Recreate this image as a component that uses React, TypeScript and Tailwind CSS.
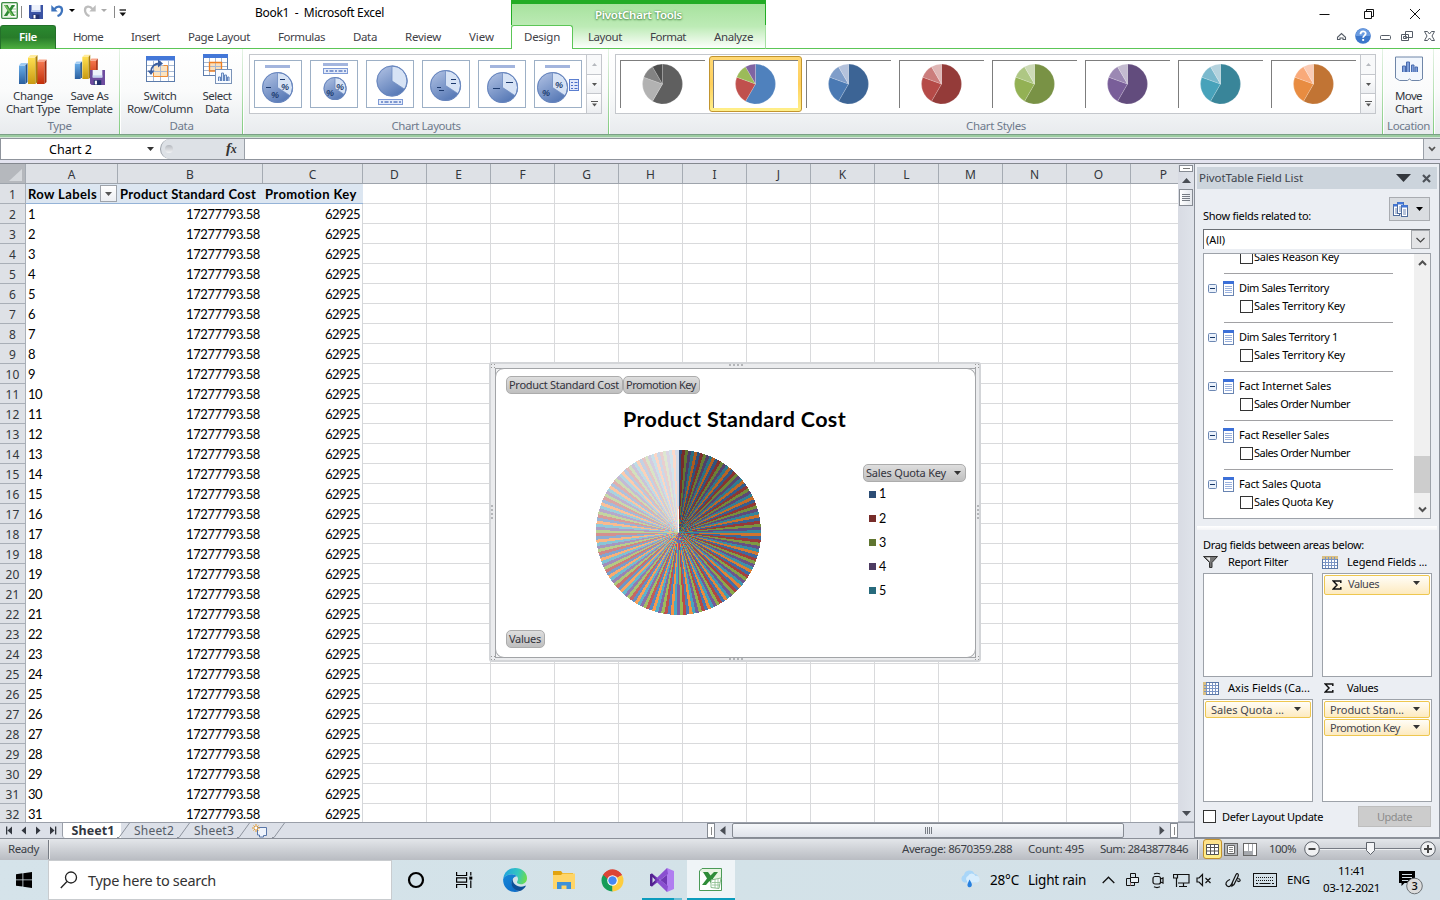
import React, { useLayoutEffect, useRef, useState } from "react";

const UI = "font-['Noto_Sans','Open_Sans',sans-serif]";
const CAL = "font-['Lato','Liberation_Sans',sans-serif]";

/* Text whose letter spacing is adjusted so that it fills a given width. */
function T({ w, className = "", children }: { w: number; className?: string; children: string }) {
  const ref = useRef<HTMLSpanElement>(null);
  const [ls, setLs] = useState(0);
  useLayoutEffect(() => {
    if (ref.current) {
      const natural = ref.current.getBoundingClientRect().width;
      setLs((w - natural) / children.length);
    }
  }, []);
  return (
    <span ref={ref} className={"inline-block shrink-0 whitespace-pre leading-none " + className} style={{ letterSpacing: ls }}>
      {children}
    </span>
  );
}

function Caret({ className = "", w = 7, h = 4, up = false }: { className?: string; w?: number; h?: number; up?: boolean }) {
  return (
    <svg width={w} height={h} viewBox={`0 0 ${w} ${h}`} className={"shrink-0 " + className}>
      <path d={up ? `M0 ${h}H${w}L${w / 2} 0Z` : `M0 0H${w}L${w / 2} ${h}Z`} fill="currentColor" />
    </svg>
  );
}

function wedge(cx: number, cy: number, r: number, a0: number, a1: number) {
  const p = (a: number) => {
    const t = ((a - 90) * Math.PI) / 180;
    return `${(cx + r * Math.cos(t)).toFixed(3)} ${(cy + r * Math.sin(t)).toFixed(3)}`;
  };
  return `M${cx} ${cy}L${p(a0)}A${r} ${r} 0 ${a1 - a0 > 180 ? 1 : 0} 1 ${p(a1)}Z`;
}

/* ---------- Title bar icons ---------- */
function ExcelIcon({ size = 17 }: { size?: number }) {
  return (
    <svg width={size} height={size} viewBox="0 0 17 17">
      <rect x=".7" y=".7" width="15.6" height="15.6" rx="1" fill="#eaf5e4" stroke="#3d8b45" strokeWidth="1.3" />
      <path d="M10 2h5v13h-5z" fill="#fff" />
      <path d="M10 4h4M10 7h5M10 10h5M10 13h5" stroke="#9cc89a" strokeWidth="1" />
      <path d="M3 3h3.600l2 3.400L10.800 3H14L10.400 8.500 14 14h-3.500L8.300 10.600 6.200 14H2.800L6.500 8.400Z" fill="#2f8a35" />
      <path d="M3 3h2l7.600 11h-2Z" fill="#77bd5e" />
    </svg>
  );
}
function SaveIcon({ c = "#3a53a4", size = 14 }: { c?: string; size?: number }) {
  return (
    <svg width={size} height={size} viewBox="0 0 14 14">
      <path d="M0 0h14v14H1.500L0 12.500Z" fill={c} />
      <path d="M2.500 0h9v7h-9z" fill="#eef2fb" />
      <path d="M2.500 5h9v2h-9z" fill="#c4d2f0" />
      <path d="M3.500 9.500h7V14h-7z" fill="#22326e" />
      <path d="M4.500 10h2v3.500h-2z" fill="#fff" />
    </svg>
  );
}
function UndoIcon({ c, flip = false }: { c: string; flip?: boolean }) {
  return (
    <svg width="13" height="13" viewBox="0 0 13 13" className={flip ? "-scale-x-100" : ""}>
      <path d="M3.500 5.200C6 1.500 11 1.800 11 6c0 3-1.500 5-4.500 6" fill="none" stroke={c} strokeWidth="2.300" />
      <path d="M.3 1v6.500h6.400Z" fill={c} />
    </svg>
  );
}

function Header() {
  return (
    <div className="flex h-[49px] shrink-0 bg-white">
      <div className="flex w-[511px] flex-col">
        <div className="flex h-[25px] items-center">
          <div className="mb-1 ml-px w-[20px]"><ExcelIcon /></div>
          <div className="mb-0.5 h-3 w-px bg-[#888]" />
          <div className="mb-0.5 ml-[7px] w-[22px]"><SaveIcon /></div>
          <div className="mb-1 w-[18px]"><UndoIcon c="#3f74bd" /></div>
          <Caret className="mb-1 text-black" w={6} h={3} />
          <div className="mb-1 ml-2 w-[18px]"><UndoIcon c="#bdbdbd" flip /></div>
          <Caret className="mb-1 text-[#aaa]" w={6} h={3} />
          <div className="mb-0.5 ml-[7px] h-3 w-px bg-[#888]" />
          <svg width="8" height="8" viewBox="0 0 8 8" className="ml-1"><path d="M.5 1h6.500" stroke="#111" strokeWidth="1.300" /><path d="M.5 3.500h6.500L3.800 7.200Z" fill="#111" /></svg>
          <T w={129} className={"ml-[128px] mt-px text-[12px] text-black " + UI}>Book1  -  Microsoft Excel</T>
        </div>
        <div className="flex h-[24px]">
          <div className="flex h-[24px] w-[56px] items-center justify-center rounded-t-[3px] border border-b-0 border-[#24702a] bg-gradient-to-b from-[#2a8a30] via-[#287c2a] to-[#4eb040]">
            <T w={18} className={"pb-[2px] text-[11.500px] font-semibold text-white " + UI}>File</T>
          </div>
          <div className={"flex flex-1 items-center gap-7 border-b border-[#5cc657] pl-[17px] pt-px text-[11.500px] text-[#3f4147] " + UI}>
            <T w={30}>Home</T><T w={29}>Insert</T><T w={62}>Page Layout</T><T w={47}>Formulas</T><T w={24}>Data</T><T w={36}>Review</T><T w={25}>View</T>
          </div>
        </div>
      </div>
      <div className="flex w-[255px] flex-col border-t-4 border-[#22ac25] bg-gradient-to-b from-[#a7e29e] via-[#bdebb6] to-white">
        <div className="flex h-[21px] items-center justify-center border-x border-[#22ac25] pt-px">
          <T w={87} className={"text-[11.500px] font-semibold text-white [text-shadow:0_1px_2px_#4c8d49,0_0_2px_#5a9b57] " + UI}>PivotChart Tools</T>
        </div>
        <div className={"flex h-[24px] text-[11.500px] text-[#3f4147] " + UI}>
          <div className="flex w-[62px] items-center justify-center rounded-t-[3px] border border-b-0 border-[#5cc657] bg-white"><T w={36} className="pb-[2px]">Design</T></div>
          <div className="flex flex-1 items-center gap-7 border-b border-b-[#5cc657] border-r border-r-[#a5dfa2] pl-[15px] pt-px">
            <T w={34}>Layout</T><T w={36}>Format</T><T w={39}>Analyze</T>
          </div>
        </div>
      </div>
      <div className="flex flex-1 flex-col border-b border-[#5cc657]">
        <div className="flex h-[26px] items-center justify-end pt-0.5">
          <svg width="102" height="14" viewBox="0 0 102 14" className="mr-[19px]" fill="none" stroke="#111" strokeWidth="1">
            <path d="M.5 7.500h10" /><path d="M45.500 4.500h7v7h-7zM47.500 4.500v-2h7v7h-2" /><path d="M91 2l10 10M101 2l-10 10" />
          </svg>
        </div>
        <div className="flex h-[22px] items-center justify-end pb-0.5">
          <svg width="100" height="18" viewBox="0 0 100 18" className="mr-1">
            <path d="M1.500 12.500v-2.200l4-3.800 4 3.800v2.200H7V11H4v1.500Z" fill="#fff" stroke="#555c66" strokeWidth="1.100" />
            <circle cx="27" cy="9" r="7.800" fill="#3d77cb" />
            <path d="M19.500 9a7.500 7.500 0 0 1 15 0Z" fill="#6a9be0" />
            <path d="M24.500 7.200c0-3.800 5.200-3.600 5.200-.6 0 2-2.600 2-2.600 4.200" fill="none" stroke="#fff" strokeWidth="1.800" />
            <rect x="26.200" y="12" width="1.900" height="1.900" fill="#fff" />
            <rect x="44.500" y="8.500" width="10" height="4" rx="1" fill="#fff" stroke="#555c66" />
            <path d="M69.500 4.500h7v6h-7zM65.500 7.500h7v6h-7z" fill="#fff" stroke="#555c66" /><path d="M67.500 9.500h3v2h-3z" fill="none" stroke="#555c66" />
            <path d="M88.500 4.500h3l2 2.500 2-2.500h3L96 9l2.500 4.500h-3l-2-2.500-2 2.500h-3L91 9Z" fill="#fff" stroke="#555c66" />
          </svg>
        </div>
      </div>
    </div>
  );
}

/* ---------- Ribbon ---------- */
function Bars({ w = 30 }: { w?: number }) {
  return (
    <svg width={w} height={w} viewBox="0 0 30 30">
      <defs>
        <linearGradient id="bb" x2="0" y2="1"><stop stopColor="#68ade9" /><stop offset="1" stopColor="#2a5f9f" /></linearGradient>
        <linearGradient id="by" x2="0" y2="1"><stop stopColor="#ffdf50" /><stop offset="1" stopColor="#c89a12" /></linearGradient>
        <linearGradient id="br" x2="0" y2="1"><stop stopColor="#f4764e" /><stop offset="1" stopColor="#c22e08" /></linearGradient>
      </defs>
      <path d="M1 11.500h6.500V30H1z" fill="url(#bb)" /><path d="M1 11.500l2-2.500h6.500l-2 2.500Z" fill="#9fcbf3" /><path d="M7.500 11.500l2-2.500v19l-2 2Z" fill="#23538c" />
      <path d="M19 8h7.500v22H19z" fill="url(#br)" /><path d="M19 8l2-2.500h7.500l-2 2.500Z" fill="#f9a58a" /><path d="M26.500 8l2-2.500V28l-2 2Z" fill="#a32a0c" />
      <path d="M10 3.500h7.500V30H10z" fill="url(#by)" /><path d="M10 3.500L12.500 1h7l-2 2.500Z" fill="#ffeb9c" /><path d="M17.500 3.500l2-2.500v27l-2 2Z" fill="#a87d0a" />
    </svg>
  );
}
function Table({ swap = false }: { swap?: boolean }) {
  return swap ? (
    <svg width="32" height="32" viewBox="0 0 32 32">
      <rect x="2.500" y="2.500" width="28" height="25" fill="#fff" stroke="#5b7bab" />
      <rect x="2" y="2" width="29" height="4.500" fill="#4377d8" />
      <path d="M9 12h15v11H9z" fill="#fbe3c0" />
      <path d="M3 11.500h27M3 17.500h27M3 22.500h27M9.500 7v20M16.500 7v20M24.500 7v20" stroke="#a9bbd6" />
      <path d="M9.500 18.500v4h14v-11h-4" stroke="#ef8d36" fill="none" />
      <path d="M7 18c0-5.500 4-8.500 8.500-8.500" stroke="#3a5d9d" strokeWidth="1.800" fill="none" />
      <path d="M14 5.500l5 4-5 4ZM3.500 16.500h7L7 21Z" fill="#3a5d9d" />
    </svg>
  ) : (
    <svg width="32" height="32" viewBox="0 0 32 32">
      <rect x="2.500" y="1.500" width="24" height="20" fill="#fff" stroke="#5b7bab" />
      <rect x="2" y="0" width="25" height="4" fill="#4377d8" />
      <path d="M8.500 9h12v8h-12z" fill="#fbdfba" />
      <path d="M3 8.500h23M3 12.500h23M3 16.500h23M8.500 4v17M14.500 4v17M20.500 4v17" stroke="#a7b7cf" />
      <path d="M8.500 8.500h12v8.500h-12z" stroke="#ee7f22" strokeWidth="1.300" fill="none" />
      <rect x="14.500" y="15.500" width="16" height="14" fill="#f8fbff" stroke="#7a93b8" />
      <path d="M17.500 27v-4h2v4M20.500 27v-8h2v8M23.500 27v-6h2v6M26.500 27v-4h1.500v4" stroke="#6284bc" fill="#cfe0f6" />
    </svg>
  );
}

function RibbonGroup({ label, lw, className, children }: { label: string; lw: number; className: string; children: React.ReactNode }) {
  return (
    <div className={"flex shrink-0 flex-col " + className}>
      <div className="flex h-[67px] items-start">{children}</div>
      <div className={"flex h-[18px] items-center justify-center pt-0.5 text-[11.500px] text-[#6e7a8c] " + UI}><T w={lw}>{label}</T></div>
    </div>
  );
}
function Sep() {
  return <div className="h-[85px] w-[2px] shrink-0 border-r border-white bg-gradient-to-b from-[#e6f3e6] via-[#b5e0b3] to-[#7fcb7d]" />;
}
function BigButton({ icon, a, aw, b, bw, className }: { icon: React.ReactNode; a: string; aw: number; b: string; bw: number; className: string }) {
  return (
    <div className={"flex flex-col items-center pt-[5px] text-[11.500px] text-[#33373e] " + UI + " " + className}>
      <div className="flex h-[36px] items-start justify-center">{icon}</div>
      <div className="flex h-[13px] items-center"><T w={aw} className="pb-px">{a}</T></div>
      <div className="flex h-[13px] items-center"><T w={bw} className="pb-px">{b}</T></div>
    </div>
  );
}
function GalleryArrows() {
  return (
    <div className="flex w-[15px] flex-col border-l border-[#c4c7cc] text-[#555]">
      <div className="flex flex-1 items-center justify-center bg-[#f8f9fa]"><Caret up w={5} h={3} className="text-[#b6b9be]" /></div>
      <div className="flex flex-1 items-center justify-center border-y border-[#c4c7cc] bg-gradient-to-b from-white to-[#eceef1]"><Caret w={5} h={3} /></div>
      <div className="flex flex-1 items-center justify-center bg-gradient-to-b from-white to-[#eceef1]">
        <svg width="7" height="6" viewBox="0 0 7 6"><path d="M0 .5h7" stroke="#555" /><path d="M1 2.500h5L3.500 5.500Z" fill="#555" /></svg>
      </div>
    </div>
  );
}

function LayoutThumb({ kind }: { kind: number }) {
  const geo = [[22.5, 26.5, 15.5], [24, 27.5, 11.5], [25, 20, 15.5], [22.5, 24.5, 15.5], [23.5, 26.5, 15.5], [17.5, 26.5, 15.5]][kind];
  const [cx, cy, r] = geo;
  const bar = (x: number, y: number) => <rect x={x} y={y} width="25" height="3" fill="#a3b5de" />;
  const legend = (x: number, y: number) => (
    <g><rect x={x + 0.5} y={y + 0.5} width="24" height="5" fill="#e4ebf9" stroke="#7f9bd6" /><path d={`M${x + 3} ${y + 3}h20`} stroke="#5f7fc4" strokeWidth="1.500" strokeDasharray="2 1.500 4 1.500" /></g>
  );
  const pct = (x: number, y: number) => <text x={x} y={y} fontSize="9" fontStyle="italic" fontWeight="700" fill="#1c3a6e" fontFamily="Liberation Sans">%</text>;
  return (
    <div className="h-[48px] w-[48px] shrink-0 border border-[#9db0c6] bg-white">
      <svg width="46" height="46" viewBox="0 0 46 46">
        <defs><linearGradient id={"lg" + kind} x2=".6" y2="1"><stop stopColor="#b6c6e6" /><stop offset="1" stopColor="#5779b6" /></linearGradient></defs>
        <circle cx={cx} cy={cy} r={r} fill={`url(#lg${kind})`} />
        <path d={wedge(cx, cy, r - 0.5, 0, 123)} fill="#d7e3f5" stroke="#6d8bc2" strokeWidth=".8" />
        <circle cx={cx} cy={cy} r={r - 0.5} fill="none" stroke="#6886be" />
        {kind === 0 && <>{bar(10, 4)}{pct(26, 29)}{pct(16, 37)}<path d="M25 18.500h5M11 26.500h5" stroke="#1c3a6e" /></>}
        {kind === 1 && <>{bar(12, 2)}{legend(12, 7)}{pct(25, 29)}{pct(15, 35)}</>}
        {kind === 2 && legend(11, 38)}
        {kind === 3 && <path d="M28 18.500h5M28 22.500h5M14 26.500h4M16 29.500h5" stroke="#1c3a6e" />}
        {kind === 4 && <>{bar(11, 4)}<path d="M27 21.500h7M14 27.500h7" stroke="#1c3a6e" /></>}
        {kind === 5 && <>{bar(10, 4)}{pct(20, 27)}{pct(7, 35)}<rect x="34.500" y="18.500" width="9" height="11" fill="#dfe8fa" stroke="#5c7fd0" /><path d="M36 21.500h2M39.500 21.500h3M36 24.500h2M39.500 24.500h3M36 27.500h2M39.500 27.500h3" stroke="#4a6fc6" /></>}
      </svg>
    </div>
  );
}

const STYLES = [
  ["#5f5f5f", "#b2b2b2", "#838383", "#4d4d4d"],
  ["#4f81bd", "#c0504d", "#9bbb59", "#8064a2"],
  ["#3c6495", "#4a79b3", "#7f9dc9", "#b4c2dc"],
  ["#943b39", "#b54a47", "#cb7d7c", "#dfb6b5"],
  ["#799245", "#93b154", "#aec784", "#cddab7"],
  ["#624c7d", "#795e99", "#9b88b3", "#c4bbd0"],
  ["#398599", "#47a2ba", "#7bb9cd", "#b5d3de"],
  ["#c17434", "#e88c41", "#f9aa7a", "#facbb5"],
];
function StyleThumb({ c, on }: { c: string[]; on: boolean }) {
  const a = [0, 210, 290, 330, 360];
  return (
    <div className={"flex h-[56px] w-[93px] shrink-0 items-center " + (on ? "justify-center rounded-[3px] border border-[#c2952f] bg-gradient-to-b from-[#ffd873] via-[#ffd05c] to-[#fff08a]" : "pl-[4px]")}>
      <div className="h-[48px] w-[85px] border-l border-t border-[#7d7d7d] bg-white">
        <svg width="84" height="47" viewBox="0 0 84 47">
          {c.map((f, i) => <path key={i} d={wedge(41.5, 23, 20, a[i], a[i + 1])} fill={f} stroke="#fff" strokeOpacity=".35" strokeWidth=".5" />)}
        </svg>
      </div>
    </div>
  );
}

function Ribbon() {
  return (
    <>
      <div className="flex h-[85px] shrink-0 bg-gradient-to-b from-white via-[#fafbfb] to-[#e8ebee]">
        <RibbonGroup label="Type" lw={24} className="w-[119px]">
          <BigButton className="w-[66px]" icon={<Bars />} a="Change" aw={40} b="Chart Type" bw={54} />
          <BigButton className="w-[47px]" a="Save As" aw={38} b="Template" bw={46}
            icon={<div className="relative h-[31px] w-[31px]"><Bars w={25} /><div className="absolute bottom-0 right-0"><SaveIcon c="#6d4c9f" size={15} /></div></div>} />
        </RibbonGroup>
        <Sep />
        <RibbonGroup label="Data" lw={24} className="w-[121px]">
          <BigButton className="w-[78px]" icon={<Table swap />} a="Switch" aw={33} b="Row/Column" bw={66} />
          <BigButton className="w-[36px]" icon={<Table />} a="Select" aw={29} b="Data" bw={24} />
        </RibbonGroup>
        <Sep />
        <RibbonGroup label="Chart Layouts" lw={69} className="w-[364px]">
          <div className="ml-[5px] mt-[5px] flex h-[60px] w-[353px] border border-[#c4c7cc] bg-white">
            <div className="flex flex-1 gap-2 pl-1 pt-[5px]">{[0, 1, 2, 3, 4, 5].map((k) => <LayoutThumb key={k} kind={k} />)}</div>
            <GalleryArrows />
          </div>
        </RibbonGroup>
        <Sep />
        <RibbonGroup label="Chart Styles" lw={60} className="w-[772px]">
          <div className="ml-[5px] mt-[5px] flex h-[60px] w-[761px] border border-[#c4c7cc] bg-white">
            <div className="flex flex-1 pt-px">{STYLES.map((c, i) => <StyleThumb key={i} c={c} on={i === 1} />)}</div>
            <GalleryArrows />
          </div>
        </RibbonGroup>
        <Sep />
        <RibbonGroup label="Location" lw={43} className="w-[49px]">
          <BigButton className="w-[49px]" a="Move" aw={27} b="Chart" bw={27}
            icon={<svg width="30" height="30" viewBox="0 0 30 30"><path d="M1.500 3h27v22l-3 1.500h-8l-2-1.500-2 1.500h-8L1.500 24Z" fill="#f2f7fd" stroke="#6f86a8" /><path d="M8.500 18v-6h3v6M12.500 18V8h3v10M17.500 18v-7h2.500v7M21 18v-5h2.500v5" fill="#7fa0da" stroke="#486bae" /></svg>} />
        </RibbonGroup>
        <Sep />
      </div>
      <div className="h-px shrink-0 bg-[#7ba087]" />
      <div className="h-[2px] shrink-0 bg-[#9bcba0]" />
      <div className="h-px shrink-0 bg-[#d5e6da]" />
    </>
  );
}

function FormulaBar() {
  return (
    <>
      <div className="flex h-[22px] shrink-0 border-y border-[#8f949c] bg-white">
        <div className="flex w-[160px] items-center border-l border-[#8f949c]">
          <T w={43} className={"ml-[48px] mt-0.5 text-[12.500px] text-black " + UI}>Chart 2</T>
          <Caret className="ml-[55px] text-[#333]" w={7} h={4} />
        </div>
        <div className="flex h-full max-w-[85px] flex-1 items-center rounded-l-full border-l border-r border-[#9aa0a8] bg-[#dde1e6]">
          <div className="ml-1 h-2 w-2 rounded-full bg-gradient-to-b from-[#b5b9bf] to-[#f2f3f5]" />
          <span className="mb-0.5 ml-[53px] font-['Liberation_Serif',serif] text-[15px] font-bold italic leading-none tracking-tight text-[#333]">f<span className="text-[12px]">x</span></span>
        </div>
        <div className="flex-1" />
        <div className="flex w-[17px] items-center justify-center border-l border-[#9aa0a8] bg-[#e1e4e8]">
          <svg width="8" height="6" viewBox="0 0 8 6"><path d="M1 1l3 3.200L7 1" stroke="#555" strokeWidth="1.700" fill="none" /></svg>
        </div>
      </div>
      <div className="h-[3px] shrink-0 bg-[#e3e3ef]" />
      <div className="h-px shrink-0 bg-[#84888f]" />
    </>
  );
}

/* ---------- Worksheet ---------- */
const LETTERS = ["D", "E", "F", "G", "H", "I", "J", "K", "L", "M", "N", "O"];

function Grid() {
  const head = "flex h-full shrink-0 items-center justify-center border-r border-[#a5abb3] pt-0.5";
  return (
    <div className="flex w-[1178px] flex-col overflow-hidden bg-white">
      <div className={"flex h-[20px] shrink-0 border-b border-[#9ea4ac] bg-[#dee1e6] text-[12px] text-[#33373c] " + UI}>
        <div className={"w-[26px] bg-[#b5b8bd] " + head}><svg width="22" height="16" viewBox="0 0 22 16"><path d="M20 2v12H7Z" fill="#d5d8dc" /></svg></div>
        <div className={"w-[92px] " + head}>A</div>
        <div className={"w-[145px] " + head}>B</div>
        <div className={"w-[100px] " + head}>C</div>
        {LETTERS.map((l) => <div key={l} className={"w-[64px] " + head}>{l}</div>)}
        <div className="flex w-[65px] shrink-0 items-center justify-center pt-0.5">P</div>
      </div>
      {Array.from({ length: 32 }, (_, i) => (
        <div key={i} className="flex h-[20px] shrink-0">
          <div className={"flex w-[26px] shrink-0 items-center justify-center border-b border-r border-[#a9afb7] bg-[#dee1e6] pt-0.5 text-[12px] text-[#33373c] " + UI}>
            <T w={i < 9 ? 7 : 14}>{String(i + 1)}</T>
          </div>
          {i === 0 ? (
            <div className={"flex w-[337px] shrink-0 items-center border-b border-[#95b3d7] bg-[#dce6f1] pl-[2px] text-[13px] font-bold text-black " + CAL}>
              <T w={69} className="mt-0.5">Row Labels</T>
              <div className="ml-[3px] flex h-[17px] w-[17px] items-center justify-center border border-[#9ea3aa] bg-gradient-to-b from-white to-[#eceef2] text-[#555]"><Caret w={7} h={4} /></div>
              <T w={136} className="ml-[3px] mt-0.5">Product Standard Cost</T>
              <T w={92} className="ml-[9px] mt-0.5">Promotion Key</T>
            </div>
          ) : (
            <div className={"flex w-[337px] shrink-0 items-center border-r border-[#d5d7da] pt-px text-[13px] text-black " + CAL}>
              <div className="flex h-[13px] w-[92px] pl-[2px]"><T w={i < 10 ? 7 : 14}>{String(i)}</T></div>
              <div className="flex h-[13px] w-[142px] justify-end"><T w={74}>17277793.58</T></div>
              <div className="flex h-[13px] w-[100px] justify-end"><T w={35}>62925</T></div>
            </div>
          )}
          {LETTERS.map((l) => <div key={l} className="w-[64px] shrink-0 border-b border-r border-[#d9dadc]" />)}
          <div className="flex-1 border-b border-[#d9dadc]" />
        </div>
      ))}
    </div>
  );
}

const DARK = ["#2c4d75", "#772c2a", "#5f7530", "#4d3b62", "#276a7c", "#a8561c"];
const BASE = ["#4a7ebb", "#be4b48", "#98b954", "#7d60a0", "#46aac5", "#f79240"];
const PALE = ["#d3dcea", "#ead3d3", "#dfe8d3", "#dbd5e4", "#d2e4ec", "#fcdacb"];
function mix(a: string, b: string, t: number) {
  const h = (s: string, i: number) => parseInt(s.slice(i, i + 2), 16);
  return "rgb(" + [1, 3, 5].map((i) => Math.round(h(a, i) + (h(b, i) - h(a, i)) * t)).join(",") + ")";
}
function sliceColor(i: number, n: number) {
  const t = i / n;
  const k = i % 6;
  return t < 0.5 ? mix(DARK[k], BASE[k], t * 2) : mix(BASE[k], PALE[k], Math.min(1, (t - 0.5) * 2.1));
}

function FieldPill({ w, pill, children, arrow = false }: { w: number; pill: string; children: string; arrow?: boolean }) {
  return (
    <div className={"flex h-[18px] shrink-0 items-center rounded-[5px] border border-[#acacac] bg-gradient-to-b from-[#dedede] to-[#bfbfbf] pl-[2px] text-[11px] text-[#33333c] " + UI + " " + pill}>
      <T w={w} className="pb-[2px]">{children}</T>
      {arrow && <Caret className="ml-2 text-[#333]" w={7} h={4} />}
    </div>
  );
}

function Dots({ v = false, className = "" }: { v?: boolean; className?: string }) {
  return (
    <div className={"absolute flex gap-[2px] " + (v ? "flex-col " : "") + className}>
      {[0, 1, 2, 3].map((i) => <div key={i} className="h-[2px] w-[2px] bg-[#b4b6b9]" />)}
    </div>
  );
}

function ChartObject() {
  const n = 163;
  return (
    <div className="absolute left-[489px] top-[198px] h-[300px] w-[492px] rounded-[3px] border-2 border-[#d3d5d8] bg-[#ebecee] p-[4px]">
      <Dots className="left-[238px] top-0" />
      <Dots className="bottom-0 left-[238px]" />
      <Dots v className="left-0 top-[141px]" />
      <Dots v className="right-0 top-[141px]" />
      {["left-0 top-0", "right-0 top-0", "left-0 bottom-0", "right-0 bottom-0"].map((p) => (
        <div key={p} className={"absolute grid grid-cols-2 gap-[2px] " + p}>
          <div className="h-px w-px bg-[#999]" /><div className="h-px w-px bg-[#999]" /><div className="h-px w-px bg-[#999]" /><div className="h-px w-px bg-[#999]" />
        </div>
      ))}
      <div className="h-[290px] w-[481px] border border-[#a2a4a7] bg-[#f0f1f2]">
        <div className="-m-px flex h-[290px] w-[481px] flex-col rounded-[9px] border border-[#a2a4a7] bg-white">
          <div className="flex pl-[10px] pt-[7px]">
            <FieldPill w={110} pill="w-[117px]">Product Standard Cost</FieldPill>
            <FieldPill w={70} pill="w-[77px]">Promotion Key</FieldPill>
          </div>
          <div className="flex h-[50px] items-center pl-[127px] pt-[2px]">
            <T w={223} className={"text-[21.500px] font-bold text-black " + CAL}>Product Standard Cost</T>
          </div>
          <div className="flex h-[178px]">
            <svg width="167" height="167" viewBox="-83.5 -83.5 167 167" className="ml-[99px] mt-[5px] shrink-0" shapeRendering="crispEdges">
              {Array.from({ length: n }, (_, i) => (
                <path key={i} d={wedge(0, 0, 82.5, (i * 360) / n, ((i + 1) * 360) / n + 0.05)} fill={sliceColor(i, n)} />
              ))}
            </svg>
            <div className="ml-[101px] mt-[20px] flex flex-col">
              <FieldPill w={80} pill="w-[103px]" arrow>Sales Quota Key</FieldPill>
              <div className={"flex flex-col pl-[6px] text-[12.500px] text-black " + CAL}>
                {DARK.slice(0, 5).map((c, i) => (
                  <div key={c} className="flex h-[24.2px] items-center gap-[3px]">
                    <svg width="7" height="7"><rect width="7" height="7" fill={c} /></svg>
                    <T w={7} className="pt-px">{String(i + 1)}</T>
                  </div>
                ))}
              </div>
            </div>
          </div>
          <div className="pl-[10px] pt-[8px]"><FieldPill w={32} pill="w-[39px]">Values</FieldPill></div>
        </div>
      </div>
    </div>
  );
}

function VScroll() {
  return (
    <div className="flex w-[16px] flex-col items-center bg-gradient-to-r from-[#d8dbe3] to-[#dfe3ea]">
      <div className="mt-px flex h-[7px] w-[14px] items-center justify-center border border-[#868b93] bg-white"><div className="h-px w-[7px] bg-[#777]" /></div>
      <div className="flex h-[17px] items-center text-[#494d54]"><Caret up w={9} h={5} /></div>
      <div className="flex h-[17px] w-[14px] flex-col items-center justify-center gap-px border border-[#868b93] bg-gradient-to-r from-white to-[#e4e7ec]">
        {[0, 1, 2, 3].map((i) => <div key={i} className="h-px w-[8px] bg-[#777c84]" />)}
      </div>
      <div className="flex-1" />
      <div className="flex h-[16px] w-full items-center justify-center border-b border-[#b4b9c2] text-[#494d54]"><Caret w={9} h={5} /></div>
    </div>
  );
}

function SheetTab({ label, w, className }: { label: string; w: number; className: string }) {
  return (
    <div className={"flex h-full items-center text-[12px] text-[#565d68] " + UI + " " + className}>
      <svg width="13" height="15" viewBox="0 0 13 15" className="shrink-0"><path d="M0 14.500h2L12.500 0" fill="none" stroke="#8d939d" /></svg>
      {label && <T w={w} className="ml-1 mt-px">{label}</T>}
    </div>
  );
}

function SheetTabs() {
  return (
    <div className="flex h-[16px] w-[1194px] shrink-0 items-center border-t border-[#9a9fa9] bg-[#dce0e8]">
      <svg width="62" height="15" viewBox="0 0 62 15" fill="#33373f" className="shrink-0">
        <path d="M6 3.500h1.300v8H6zM12 3.500v8l-4.500-4zM26 3.500v8l-4.500-4zM36 3.500v8l4.500-4zM50 3.500v8l4.500-4zM55 3.500h1.300v8H55z" />
      </svg>
      <div className="flex h-full w-[59px] items-center justify-center rounded-bl-[3px] border-l border-[#9a9fa9] bg-white">
        <T w={43} className={"ml-0.5 mt-px text-[12.500px] font-bold text-[#33373f] " + UI}>Sheet1</T>
      </div>
      <SheetTab label="Sheet2" w={40} className="-ml-1 w-[60px]" />
      <SheetTab label="Sheet3" w={40} className="w-[60px]" />
      <div className="flex h-full items-center">
        <SheetTab label="" w={0} className="w-[15px]" />
        <svg width="16" height="14" viewBox="0 0 16 14"><path d="M5.500 3.500h9v8h-3v1.500h-4v-2h-2Z" fill="#eef3fb" stroke="#5977a9" /><path d="M4 0v8M0 4h8M1.500 1.500l5 5M6.500 1.500l-5 5" stroke="#e79a2c" /><circle cx="4" cy="4" r="1.300" fill="#fff" /></svg>
        <SheetTab label="" w={0} className="ml-[4px] w-[14px]" />
      </div>
      <div className="flex-1" />
      <div className="flex h-[15px] w-[8px] items-center justify-center border border-[#868b93] bg-white"><div className="h-[8px] w-px bg-[#888]" /></div>
      <svg width="17" height="15" viewBox="0 0 17 15" className="shrink-0"><path d="M10.500 3v9L5 7.500z" fill="#494d54" /></svg>
      <div className="flex h-[15px] w-[392px] items-center justify-center gap-px rounded-[2px] border border-[#868b93] bg-gradient-to-b from-[#f5f7fa] to-[#dfe3ea]">
        {[0, 1, 2, 3].map((i) => <div key={i} className="h-[7px] w-px bg-[#777c84]" />)}
      </div>
      <svg width="46" height="15" viewBox="0 0 46 15" className="shrink-0"><path d="M35.500 3v9l5-4.500z" fill="#494d54" /></svg>
      <div className="mr-[16px] flex h-[15px] w-[8px] items-center justify-center border border-[#868b93] bg-white"><div className="h-[8px] w-px bg-[#888]" /></div>
    </div>
  );
}

/* ---------- Field list pane ---------- */
const FIELDS: [string, number, string, number][] = [
  ["Dim Sales Territory", 90, "Sales Territory Key", 91],
  ["Dim Sales Territory 1", 99, "Sales Territory Key", 91],
  ["Fact Internet Sales", 92, "Sales Order Number", 96],
  ["Fact Reseller Sales", 90, "Sales Order Number", 96],
  ["Fact Sales Quota", 82, "Sales Quota Key", 79],
];

function CheckRow({ label, w }: { label: string; w: number }) {
  return (
    <div className="flex h-[18px] items-center pl-[36px]">
      <div className="mr-px h-[13px] w-[13px] border border-[#333] bg-white" /><T w={w} className="pb-[2px]">{label}</T>
    </div>
  );
}
function GridIcon({ side = false }: { side?: boolean }) {
  return (
    <svg width="16" height="13" viewBox="0 0 16 13" className="shrink-0">
      <rect x=".5" y=".5" width="15" height="12" fill="#fff" stroke="#5b77a6" />
      <path d={side ? "M0 0h3v13H0z" : "M0 0h16v3H0z"} fill="#d9bf83" />
      <path d="M1 3.500h14M1 6.500h14M1 9.500h14M3.500 1v11M6.500 1v11M9.500 1v11M12.500 1v11" stroke="#7a94c4" />
    </svg>
  );
}
function AreaBox({ icon, label, lw, children, h }: { icon: React.ReactNode; label: string; lw: number; children?: React.ReactNode; h: string }) {
  return (
    <div className="flex w-[110px] flex-col">
      <div className="flex h-[22px] items-center">
        <div className="flex w-[25px] shrink-0">{icon}</div><T w={lw} className="pb-[2px]">{label}</T>
      </div>
      <div className={"flex flex-col gap-px border border-[#9da2a9] bg-white p-px " + h}>{children}</div>
    </div>
  );
}
function AreaItem({ label, w, sigma = false }: { label: string; w: number; sigma?: boolean }) {
  return (
    <div className={"flex items-center rounded-[2px] border border-[#eec750] bg-gradient-to-b from-[#fffdf7] to-[#fdeabf] pr-[9px] text-[#45464f] " + (sigma ? "h-[20px] pb-[3px] pl-[7px]" : "h-[17px] pl-[5px]")}>
      {sigma && <Sigma className="mr-[6px] mt-0.5" />}
      <T w={w}>{label}</T>
      <div className="flex-1" />
      <Caret className="mb-0.5 text-[#333]" w={7} h={4} />
    </div>
  );
}
function Sigma({ className = "" }: { className?: string }) {
  return (
    <svg width="10" height="10" viewBox="0 0 10 10" className={"shrink-0 " + className}><path d="M8.800 3V1H1.200L5 5 1.200 9h7.600V7" fill="none" stroke="#111" strokeWidth="1.500" /></svg>
  );
}

function Pane() {
  return (
    <div className={"flex h-[674px] w-[246px] flex-col border-b border-l border-r border-[#8b9099] bg-[#ebeef3] text-[11px] text-black " + UI}>
      <div className="mx-[2px] mt-[3px] flex h-[22px] shrink-0 items-center bg-[#ccd4dc] pl-[2px] text-[11.500px] text-[#40444c]">
        <T w={104}>PivotTable Field List</T>
        <Caret className="ml-[93px] text-[#33373d]" w={15} h={8} />
        <svg width="9" height="9" viewBox="0 0 9 9" className="ml-[11px]"><path d="M1 1l7 7M8 1L1 8" stroke="#4d5259" strokeWidth="2.200" /></svg>
      </div>
      <div className="flex h-[40px] shrink-0 items-start justify-between pl-[8px] pr-[9px] pt-[8px]">
        <T w={108} className="mt-[13px]">Show fields related to:</T>
        <div className="flex h-[24px] w-[41px] items-center border border-[#a9acb1] bg-[#dadde1] pl-[3px]">
          <svg width="16" height="17" viewBox="0 0 16 17">
            {[[1, 3], [5, 1], [9, 4]].map(([x, y]) => (
              <g key={x}><rect x={x - 0.5} y={y + 0.5} width="6" height="11" fill="#fff" stroke="#4f6c9c" /><rect x={x - 0.5} y={y} width="6" height="2.500" fill="#4377d8" /><path d={`M${x + 1} ${y + 5}h3M${x + 1} ${y + 7}h3M${x + 1} ${y + 9}h3`} stroke="#6e87b4" /></g>
            ))}
          </svg>
          <Caret className="ml-[7px]" w={7} h={4} />
        </div>
      </div>
      <div className="ml-[8px] flex h-[20px] w-[227px] shrink-0 border-l border-t border-[#6b6f75] bg-white">
        <div className="flex flex-1 items-center pl-[2px]"><T w={19}>(All)</T></div>
        <div className="flex w-[19px] items-center justify-center border border-[#a5a8ac] bg-[#e3e4e6]"><svg width="9" height="6" viewBox="0 0 9 6"><path d="M.5 1l4 4 4-4" fill="none" stroke="#444" strokeWidth="1.200" /></svg></div>
      </div>
      <div className="ml-[8px] mt-[4px] flex h-[266px] w-[228px] shrink-0 border border-[#9da2a9] bg-white">
        <div className="flex flex-1 flex-col overflow-hidden">
          <div className="h-[13px] shrink-0"><div className="-mt-[6px]"><CheckRow label="Sales Reason Key" w={85} /></div></div>
          {FIELDS.map(([a, aw, b, bw]) => (
            <div key={a} className="h-[49px] shrink-0 pt-[6px]">
              <div className="ml-[20px] h-px w-[169px] bg-[#a1a1a4]" />
              <div className="mt-[5px] flex h-[18px] items-center pl-[4px]">
                <svg width="9" height="9" viewBox="0 0 9 9"><rect x=".5" y=".5" width="8" height="8" rx="1" fill="#eaf1fb" stroke="#6d88b3" /><path d="M2 4.500h5" stroke="#173766" /></svg>
                <svg width="11" height="15" viewBox="0 0 11 15" className="ml-[6px]"><rect x=".5" y=".5" width="10" height="14" fill="#fff" stroke="#6884b2" /><path d="M0 0h11v3H0z" fill="#3c70d8" /><path d="M2 5.500h7M2 7.500h7M2 9.500h7M2 11.500h7" stroke="#9bb2de" /></svg>
                <T w={aw} className="ml-[5px] pb-[2px]">{a}</T>
              </div>
              <CheckRow label={b} w={bw} />
            </div>
          ))}
        </div>
        <div className="flex w-[16px] flex-col items-center bg-[#f0f0f0]">
          <svg width="9" height="17" viewBox="0 0 9 17"><path d="M1 11l3.500-3.500L8 11" fill="none" stroke="#505050" strokeWidth="2" /></svg>
          <div className="mt-[185px] h-[37px] w-full bg-[#cdcdcd]" />
          <div className="flex-1" />
          <svg width="9" height="17" viewBox="0 0 9 17"><path d="M1 6.500L4.500 10 8 6.500" fill="none" stroke="#505050" strokeWidth="2" /></svg>
        </div>
      </div>
      <div className="mx-[2px] mt-[7px] h-[4px] shrink-0 bg-gradient-to-b from-white to-[#f4f5f7]" />
      <div className="ml-[8px] mt-[8px] flex h-[13px] shrink-0 items-center"><T w={161}>Drag fields between areas below:</T></div>
      <div className="ml-[8px] flex gap-[9px]">
        <AreaBox h="h-[104px]" label="Report Filter" lw={60}
          icon={<svg width="15" height="12" viewBox="0 0 15 12"><path d="M.5.500h14L9 6.500V11.500H6.500V6.500Z" fill="#777" stroke="#333" /><path d="M3 1.500h4v4Z" fill="#eee" /></svg>} />
        <AreaBox h="h-[104px]" label="Legend Fields ..." lw={80} icon={<GridIcon />}><AreaItem label="Values" w={31} sigma /></AreaBox>
      </div>
      <div className="ml-[8px] flex gap-[9px]">
        <AreaBox h="h-[103px]" label="Axis Fields (Ca..." lw={82} icon={<GridIcon side />}><AreaItem label="Sales Quota ..." w={73} /></AreaBox>
        <AreaBox h="h-[103px]" label="Values" lw={31} icon={<Sigma className="ml-[2px]" />}><AreaItem label="Product Stan..." w={74} /><AreaItem label="Promotion Key" w={70} /></AreaBox>
      </div>
      <div className="ml-[8px] mt-[4px] flex h-[21px] items-center">
        <div className="mr-[6px] h-[13px] w-[13px] border border-[#333] bg-white" />
        <T w={101}>Defer Layout Update</T>
        <div className="ml-[35px] flex h-[21px] w-[73px] items-center justify-center border border-[#bdbdbd] bg-[#cccccc] text-[#8c8c8c]"><T w={35}>Update</T></div>
      </div>
    </div>
  );
}

/* ---------- Status bar ---------- */
function StatusBar() {
  return (
    <div className={"flex h-[22px] shrink-0 items-center border-t border-[#8b9099] bg-gradient-to-b from-[#e3e6ea] to-[#b9bcc2] pb-px text-[11.500px] text-[#3b3f46] " + UI}>
      <T w={31} className="ml-[8px]">Ready</T>
      <div className="ml-[9px] h-[19px] w-[2px] border-l border-r border-l-[#777c84] border-r-[#eee]" />
      <div className="flex-1" />
      <T w={110}>Average: 8670359.288</T>
      <T w={56} className="ml-4">Count: 495</T>
      <T w={88} className="ml-4">Sum: 2843877846</T>
      <div className="ml-[9px] h-[19px] w-[2px] border-l border-r border-l-[#777c84] border-r-[#eee]" />
      <div className="ml-[4px] flex h-[20px] w-[19px] items-center justify-center rounded-[3px] border border-[#c2902c] bg-gradient-to-b from-[#fde08a] to-[#fff089]">
        <svg width="13" height="11" viewBox="0 0 13 11"><path d="M.5.500h12v10H.5zM.5 3.500h12M.5 7h12M4.500.500v10M8.500.500v10" fill="#fff" stroke="#555" /></svg>
      </div>
      <svg width="14" height="13" viewBox="0 0 14 13" className="ml-[2px]"><rect x=".5" y=".5" width="13" height="12" fill="#b5b8bd" stroke="#666" /><path d="M3.500 2.500h7v8h-7z" fill="#fff" stroke="#666" /><path d="M5 4.500h4M5 6.500h4M5 8.500h4" stroke="#888" /></svg>
      <svg width="14" height="13" viewBox="0 0 14 13" className="ml-[5px]"><rect x=".5" y=".5" width="13" height="12" fill="#a5a8ad" stroke="#666" /><path d="M1 1h4v7H1zM6 1h3v7H6zM10 1h3v11h-3z" fill="#fff" /></svg>
      <T w={27} className="ml-[12px] mr-px">100%</T>
      <svg width="134" height="18" viewBox="0 0 134 18" className="ml-[6px] mr-[3px]">
        <path d="M17 8.500h100" stroke="#767b84" /><path d="M17 9.500h100" stroke="#eef0f2" />
        <circle cx="9" cy="9" r="7.300" fill="#f0f1f3" stroke="#5e636b" /><path d="M5.500 9h7" stroke="#444" strokeWidth="2" />
        <circle cx="125" cy="9" r="7.300" fill="#f0f1f3" stroke="#5e636b" /><path d="M121 9h8M125 5v8" stroke="#444" strokeWidth="2" />
        <path d="M63.500 2.500h8v8l-4 4-4-4Z" fill="#f4f5f7" stroke="#5e636b" />
      </svg>
    </div>
  );
}

/* ---------- Taskbar ---------- */
function Edge() {
  return (
    <svg width="24" height="24" viewBox="0 0 24 24">
      <defs>
        <linearGradient id="e1" x1="0" x2="1" y1=".3" y2=".5"><stop stopColor="#1fa2e0" /><stop offset=".6" stopColor="#34c6c0" /><stop offset="1" stopColor="#6bdc4f" /></linearGradient>
        <linearGradient id="e2" x2=".6" y2="1"><stop stopColor="#1587d8" /><stop offset="1" stopColor="#0f6fc9" /></linearGradient>
      </defs>
      <path d="M.2 10.500C1.200 4 6 0 12.200 0 19 0 24 4.500 24 10.200c0 3.600-2.600 6-6 6-3 0-4.200-1.200-4-2.200.2-.8 1-1.200 1-3 0-2.500-2.500-4.700-6-4.700-4 0-7.200 2-8.800 4.200Z" fill="url(#e1)" />
      <path d="M.1 11C1.500 8 5 6.300 9 6.300c2 0 3.800.8 5 2-3 .2-5.300 3-5.300 6.200 0 5 4 8 7.800 8.500C10 26 0 22 .1 11Z" fill="url(#e2)" />
      <path d="M9.700 10.500C6.500 15.500 9.500 23 17 23c2.500-1 4.500-2.800 5.700-4.800.2-.5-.2-.7-.6-.5-6 2.800-13-1-12.400-7.200Z" fill="#0d4f97" />
    </svg>
  );
}
function Chrome() {
  return (
    <svg width="23" height="23" viewBox="0 0 24 24">
      <path d={wedge(12, 12, 11.5, -60, 60)} fill="#dc4437" /><path d={wedge(12, 12, 11.5, 60, 180)} fill="#fdcd3f" /><path d={wedge(12, 12, 11.5, 180, 300)} fill="#149c58" />
      <path d="M2.100 6.200l5 8.600 4.900-2.800-3-6Z" fill="#149c58" /><path d="M16.800 14.700L12 23.500V12l4-4.500Z" fill="#fdcd3f" /><path d="M12 6.400h10A11.500 11.500 0 0 0 2.300 6l4.600 4.500Z" fill="#dc4437" />
      <circle cx="12" cy="12" r="5.500" fill="#fff" /><circle cx="12" cy="12" r="4.400" fill="#4688f4" />
    </svg>
  );
}

function Taskbar() {
  return (
    <div className={"flex h-[40px] shrink-0 items-center bg-gradient-to-r from-[#d5e3ea] via-[#d3e2e8] to-[#d4e0e8] text-black " + UI}>
      <div className="flex w-[48px] justify-center">
        <svg width="16" height="16" viewBox="0 0 16 16"><path d="M0 2.200l6.500-.9v6.200H0zM7.300 1.200L16 0v7.500H7.300zM0 8.300h6.500v6.300L0 13.700zM7.300 8.300H16V16l-8.700-1.200z" /></svg>
      </div>
      <div className="flex h-full w-[344px] items-center border border-[#c9cccf] bg-white">
        <svg width="18" height="18" viewBox="0 0 18 18" className="ml-[11px]" fill="none" stroke="#222" strokeWidth="1.300"><circle cx="11" cy="6.500" r="5.500" /><path d="M7 10.500L.8 17" /></svg>
        <T w={128} className="ml-[10px] text-[14.500px] text-[#333]">Type here to search</T>
      </div>
      <div className="flex w-[48px] justify-center"><svg width="18" height="18" viewBox="0 0 18 18"><circle cx="9" cy="9" r="7" fill="none" stroke="#000" strokeWidth="2.200" /></svg></div>
      <div className="flex w-[48px] justify-center">
        <svg width="17" height="16" viewBox="0 0 17 16" fill="none" stroke="#000" strokeWidth="1.200"><path d="M.6 0v3.500h10V0M.6 16v-3.500h10V16M.6 5.800h10v4.400H.6zM14.800 0v3.500M14.800 8.500V16" /><path d="M13.300 4.600h3v3h-3z" fill="#000" stroke="none" /></svg>
      </div>
      <div className="ml-[3px] flex w-[48px] justify-center"><Edge /></div>
      <div className="flex w-[49px] justify-center">
        <svg width="22" height="19" viewBox="0 0 22 19"><path d="M0 0h8l1.500 2H20v4H0z" fill="#e2a30f" /><path d="M0 4h8l1.500-1.500H22V18H0z" fill="#ffd567" /><path d="M4 18v-7h14v7h-4.500v-3.500h-5V18Z" fill="#3d91d8" /></svg>
      </div>
      <div className="flex w-[49px] justify-center"><Chrome /></div>
      <div className="flex h-full w-[49px] flex-col items-center justify-between">
        <div />
        <svg width="24" height="24" viewBox="0 0 24 24" className="mt-[2px]"><path d="M0 6.500L2 5.500l16 12.800V6L2 18.500 0 17.500Z" fill="#7038b4" /><path d="M17 0l7 3v18l-7 3Z" fill="#b07ef0" /><path d="M17 0L6.500 10.300 9 13 18 6ZM17 24L6.500 13.700 9 11l9 7Z" fill="#8a4fd0" /><path d="M0 6.500l2-1 3.300 4.200v4.600L2 18.500l-2-1Z" fill="#52218f" /><path d="M2.500 9v6l2.800-3Z" fill="#d5e1e8" /></svg>
        <div className="flex h-[2px] w-[40px] bg-[#69bfd6]"><div className="h-full w-[32px] bg-[#0c9cbd]" /></div>
      </div>
      <div className="ml-px flex h-full w-[48px] flex-col items-center justify-between bg-[#eff4f7]">
        <div />
        <svg width="23" height="23" viewBox="0 0 23 23" className="mr-0.5"><path d="M3 .5h19.500V18H.5V3Z" fill="#e8f4e2" stroke="#4b9a57" /><path d="M.5 3v19.500h22V15" fill="#fff" stroke="#4b9a57" /><path d="M4 4h5l2.500 3.500L15 4h4l-5 6.500L18 17h-5l-2.500-4L7 17H3l5-6.500Z" fill="#2f8c38" /><path d="M12 12l10-2-2 10.500-8-1Z" fill="#fff" stroke="#8bbd8d" /><path d="M13 14.500h8M13 17h8M16 11v9M19 11v9" stroke="#8bbd8d" strokeWidth=".8" /></svg>
        <div className="h-[2px] w-full bg-[#0c9cbd]" />
      </div>
      <div className="flex-1" />
      <svg width="22" height="20" viewBox="0 0 22 20"><path d="M5 12.500a4 4 0 0 1 0-7.500A5.500 5.500 0 0 1 15.500 4 4.500 4.500 0 0 1 17 12.500Z" fill="#a9d6f8" /><path d="M8 11a3 3 0 0 1 1-5 4 4 0 0 1 7.500 0A3 3 0 0 1 18 12.500H8Z" fill="#d7edfd" /><path d="M10.500 9.500c2 3.500 3 5 2 6.800-1 1.600-3.300 1.200-3.900-.2-.6-1.600.5-3.200 1.900-6.600Z" fill="#2780df" /></svg>
      <T w={29} className="ml-[9px] mt-0.5 text-[13.500px]">28°C</T>
      <T w={58} className="ml-[9px] mt-0.5 text-[13.500px]">Light rain</T>
      <svg width="13" height="8" viewBox="0 0 13 8" className="ml-[16px]"><path d="M.7 7l5.800-5.800L12.300 7" fill="none" stroke="#111" strokeWidth="1.300" /></svg>
      <svg width="14" height="14" viewBox="0 0 14 14" className="ml-[11px]" fill="none" stroke="#111"><path d="M4.500 4.500v-4h5v4M4.500 5.500h-4v7h8v-3" /><path d="M4.500 4.500h8v5h-8z" fill="#fff" fillOpacity=".5" /><path d="M4.500 9.500v3" stroke="#a77" /></svg>
      <svg width="14" height="17" viewBox="0 0 14 17" className="ml-[11px]" fill="none" stroke="#111" strokeWidth="1.200"><rect x="2" y="4.500" width="7.500" height="7.500" rx="2" /><path d="M9.500 7l2.500-1v5l-2.500-1M3 2q3-1.500 6 0M3 14.800q3 1.500 6 0" /></svg>
      <svg width="17" height="15" viewBox="0 0 17 15" className="ml-[8px]" fill="none" stroke="#111" strokeWidth="1.200"><path d="M5 1.500h11v8.500H5M3.500 5v9M.5 1.500h4v3.500h-4zM6 13.500h8M10.500 10v3.500" /></svg>
      <svg width="16" height="14" viewBox="0 0 16 14" className="ml-[6px]" fill="none" stroke="#111" strokeWidth="1.200"><path d="M1 5h2l3.500-3.500v11L3 9H1zM9.500 5l5 5M14.500 5l-5 5" /></svg>
      <svg width="17" height="17" viewBox="0 0 17 17" className="ml-[13px]" fill="none" stroke="#111" strokeWidth="1.200"><path d="M5 7.500Q.5 9.500 1 12.500 2 15 4.500 14.500 6.500 13.500 8 9L11 2.500q1.200-1.500 2-.5t-.2 3L9 12.500 7 14l.3-2.800M12 6.500l2.500.5q1.500 2-.5 2.500l-2-.8" /></svg>
      <svg width="24" height="14" viewBox="0 0 24 14" className="ml-[11px]" fill="none" stroke="#111"><rect x=".5" y=".5" width="23" height="13" /><path d="M3 4.500h18M3 7.500h18" strokeDasharray="1 1" /><path d="M3 10.500h2M6.500 10.500h11M19 10.500h2" /></svg>
      <T w={23} className="ml-[10px] text-[11.500px]">ENG</T>
      <div className="ml-[13px] flex w-[57px] flex-col items-center gap-[6px] pb-[2px] text-[11.500px]"><T w={27}>11:41</T><T w={57}>03-12-2021</T></div>
      <svg width="26" height="26" viewBox="0 0 26 26" className="ml-[18px] mr-[16px] mt-1">
        <path d="M1 2h16v12H6.500L3.500 17v-3H1z" fill="#000" /><path d="M4 5.500h10M4 8.500h10M4 11.500h6" stroke="#d3dfe6" />
        <circle cx="16.500" cy="17" r="7.800" fill="#dcdcdc" stroke="#6c7175" /><text x="13.400" y="21" fontSize="11" fontWeight="600" fontFamily="Open Sans" fill="#111">3</text>
      </svg>
    </div>
  );
}

export default function App() {
  return (
    <div className="flex h-[900px] w-[1440px] flex-col overflow-hidden bg-white">
      <Header />
      <Ribbon />
      <FormulaBar />
      <div className="flex h-[674px] shrink-0">
        <div className="flex w-[1194px] flex-col">
          <div className="relative flex h-[658px] overflow-hidden">
            <Grid />
            <ChartObject />
            <VScroll />
          </div>
          <SheetTabs />
        </div>
        <Pane />
      </div>
      <StatusBar />
      <Taskbar />
    </div>
  );
}
